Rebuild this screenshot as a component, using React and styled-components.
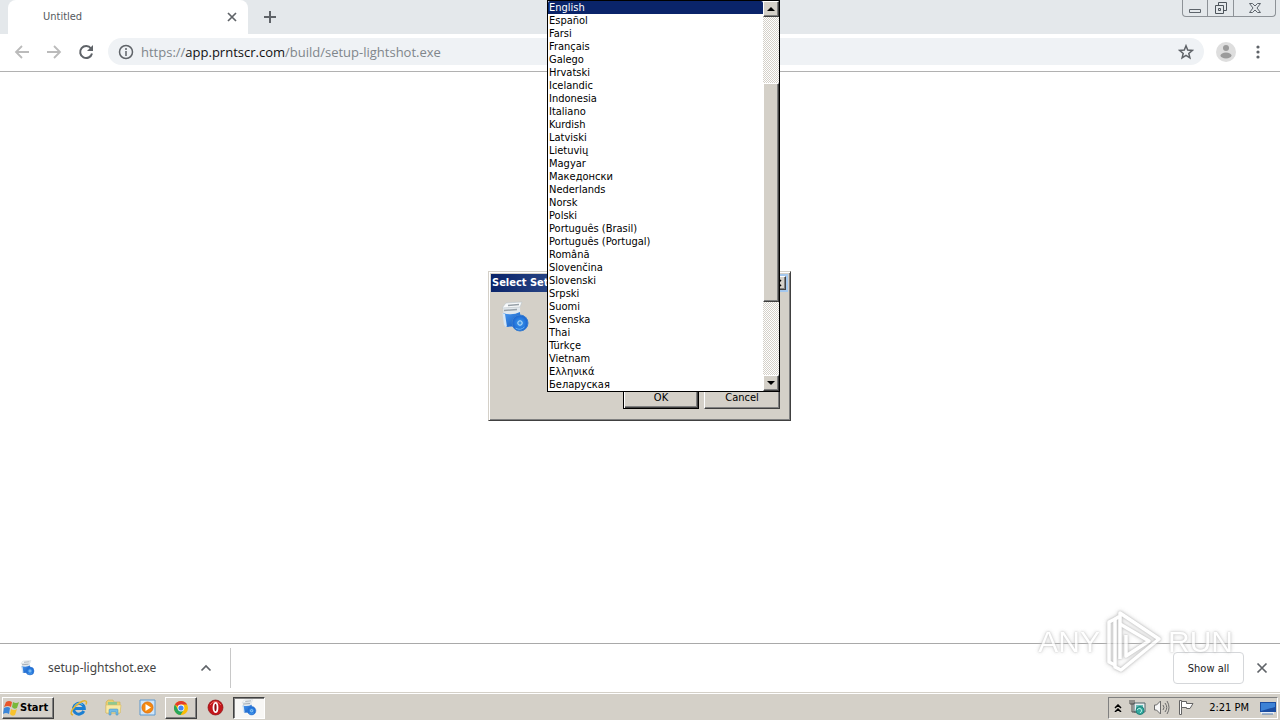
import React from "react";
import styled, { createGlobalStyle, css } from "styled-components";

const GlobalStyle = createGlobalStyle`
  * { box-sizing: border-box; }
  html, body { margin: 0; height: 100%; }
  #root { height: 100%; }
  body, button, input, select {
    font-family: "DejaVu Sans Condensed", "DejaVu Sans", sans-serif;
    font-size: 11px;
    color: #000;
  }
`;

const face = "#d4d0c8";

const Desktop = styled.div`
  position: relative;
  display: flex;
  flex-direction: column;
  min-height: 100vh;
  overflow: hidden;
  background: #fff;
`;

/* Browser window */
const Browser = styled.div`
  flex: 1;
  display: flex;
  flex-direction: column;
`;
const TabStrip = styled.header`
  display: flex;
  align-items: flex-start;
  height: 34px;
  padding-left: 8px;
  background: #e4e8eb;
`;
const Tab = styled.div`
  display: flex;
  align-items: center;
  width: 240px;
  height: 34px;
  padding: 0 10px 0 35px;
  border-radius: 8px 8px 0 0;
  background: #fff;
  color: #55595d;
`;
const TabTitle = styled.span`
  flex: 1;
  line-height: 16px;
`;
const IconButton = styled.button`
  display: grid;
  place-items: center;
  flex: none;
  width: ${(p) => p.$w || 16}px;
  height: ${(p) => p.$h || 16}px;
  padding: 0;
  border: 0;
  background: transparent;
`;
const WindowButtons = styled.div`
  display: flex;
  height: 17px;
  margin: 0 4px 0 auto;
  border: 1px solid #8d9297;
  border-top: 0;
  border-radius: 0 0 4px 4px;
`;
const WindowButton = styled(IconButton)`
  height: 16px;
  & + & { border-left: 1px solid #8d9297; }
`;
const Toolbar = styled.nav`
  display: flex;
  align-items: center;
  height: 38px;
  padding: 0 12px 2px;
  border-bottom: 1px solid #b1b1b1;
  background: #fff;
`;
const NavButtons = styled.div`
  display: flex;
  gap: 12px;
  margin-right: 12px;
`;
const AddressBar = styled.div`
  display: flex;
  align-items: center;
  flex: 1;
  height: 27px;
  padding: 0 9px;
  border-radius: 14px;
  background: #eff2f5;
`;
const Url = styled.a`
  flex: 1;
  margin-left: 6px;
  font-family: "Open Sans", "Noto Sans", sans-serif;
  font-size: 13px;
  line-height: 18px;
  color: #80868b;
  text-decoration: none;
  white-space: nowrap;
`;
const Host = styled.span`
  color: #111;
`;
const ToolbarEnd = styled.div`
  display: flex;
  gap: 12px;
  margin-left: 12px;
`;
const Page = styled.main`
  flex: 1;
`;
const DownloadShelf = styled.footer`
  display: flex;
  align-items: center;
  height: 49px;
  padding-right: 10px;
  border-top: 1px solid #a9a9a9;
  background: #fff;
`;
const DownloadItem = styled.div`
  display: flex;
  align-items: center;
  width: 231px;
  height: 40px;
  padding: 0 16px 0 20px;
  border-right: 1px solid #c8c8c8;
`;
const FileLink = styled.a`
  flex: 1;
  margin-left: 12px;
  font-family: "Noto Sans", sans-serif;
  font-size: 12px;
  line-height: 18px;
  color: #444;
  text-decoration: none;
`;
const ShowAll = styled.button`
  width: 71px;
  height: 32px;
  margin: 0 10px 0 auto;
  border: 1px solid #d5d7da;
  border-radius: 4px;
  background: #fff;
  color: #222;
`;

/* Setup dialog */
const WorkArea = styled.div`
  position: absolute;
  inset: 0 1px 28px 0;
  display: grid;
  place-items: center;
  pointer-events: none;
`;
const Dialog = styled.section`
  position: relative;
  width: 303px;
  height: 150px;
  padding: 2px;
  border: 1px solid;
  border-color: ${face} #404040 #404040 ${face};
  box-shadow: inset 1px 1px #fff, inset -1px -1px #808080;
  background: ${face};
  pointer-events: auto;
`;
const TitleBar = styled.div`
  display: flex;
  align-items: center;
  justify-content: space-between;
  height: 18px;
  padding: 0 2px 0 1px;
  background: linear-gradient(90deg, #0a246a, #a6caf0);
`;
const Title = styled.h1`
  margin: 0;
  font-size: 11px;
  font-weight: bold;
  line-height: 18px;
  color: #fff;
`;
const raised = css`
  border: 1px solid;
  border-color: #fff #404040 #404040 #fff;
  box-shadow: inset -1px -1px #808080;
  background: ${face};
`;
const CloseBox = styled.button`
  ${raised}
  display: grid;
  place-items: center;
  width: 16px;
  height: 14px;
  padding: 0;
`;
const DialogBody = styled.div`
  display: flex;
  flex-direction: column;
  justify-content: space-between;
  height: 126px;
  padding: 9px 8px 9px 9px;
`;
const DialogButtons = styled.div`
  display: flex;
  justify-content: flex-end;
  gap: 5px;
`;
const DialogButton = styled.button`
  ${raised}
  width: 76px;
  height: 23px;
  padding: 0 0 1px;
  ${(p) =>
    p.$primary &&
    css`
      border-color: #000;
      box-shadow: inset 1px 1px #fff, inset -1px -1px #404040, inset -2px -2px #808080;
    `}
`;
const LanguagePopup = styled.div`
  position: absolute;
  left: 58px;
  bottom: 28px;
  display: flex;
  width: 233px;
  border: 1px solid #000;
  background: #fff;
`;
const LanguageList = styled.select`
  flex: 1;
  height: 390px;
  padding: 0;
  border: 0;
  outline: 0;
  overflow: hidden;
  background: #fff;
  scrollbar-width: none;
`;
const Language = styled.option`
  height: 13px;
  min-height: 13px;
  padding: 0 1px;
  font-size: 11px;
  line-height: 13px;
  color: #000;
  &:checked {
    background: linear-gradient(#0a246a, #0a246a);
    -webkit-text-fill-color: #fff;
  }
`;
const ScrollTrack = styled.div`
  display: flex;
  flex-direction: column;
  width: 16px;
  background: repeating-conic-gradient(#fff 0 25%, ${face} 0 50%) 0 0 / 2px 2px;
`;
const ScrollArrow = styled.button`
  ${raised}
  display: grid;
  place-items: center;
  height: 16px;
  padding: 0;
`;
const ScrollThumb = styled.div`
  ${raised}
  height: 219px;
  margin: 66px 0 auto;
`;

/* Taskbar */
const Taskbar = styled.footer`
  display: flex;
  align-items: center;
  height: 28px;
  padding: 2px 2px 0 2px;
  border-top: 1px solid ${face};
  box-shadow: inset 0 1px #fff;
  background: ${face};
`;
const StartButton = styled.button`
  ${raised}
  display: flex;
  align-items: center;
  width: 52px;
  height: 22px;
  padding: 0;
  font-weight: bold;
`;
const TaskButtons = styled.div`
  display: flex;
  gap: 2px;
  margin-left: 9px;
`;
const TaskButton = styled.button`
  display: grid;
  place-items: center;
  width: 32px;
  height: 22px;
  padding: 0;
  border: 0;
  background: transparent;
  ${(p) => p.$state === "open" && raised}
  ${(p) =>
    p.$state === "active" &&
    css`
      border: 1px solid;
      border-color: #404040 #fff #fff #404040;
      box-shadow: inset 1px 1px #808080;
      background: #f8f7f5;
    `}
`;
const Tray = styled.div`
  display: flex;
  align-items: center;
  gap: 7px;
  height: 22px;
  margin-left: auto;
  padding: 0 1px 0 5px;
  border: 1px solid;
  border-color: #808080 #fff #fff #808080;
`;
const Clock = styled.time`
  margin: 0 4px 0 8px;
  line-height: 16px;
`;

/* Watermark */
const Watermark = styled.div`
  position: absolute;
  right: 47px;
  bottom: 46px;
  display: flex;
  align-items: center;
  gap: 5px;
  pointer-events: none;
  opacity: 0.8;
`;
const WatermarkText = styled.span`
  font-family: "Liberation Sans", sans-serif;
  font-size: 30px;
  line-height: 34px;
  color: #fff;
  text-shadow: 0 0 2px #b0b0b0, 0 0 4px #c4c4c4;
`;
const WatermarkLogo = styled.svg`
  filter: drop-shadow(0 0 1px #aaa) drop-shadow(0 0 2px #ccc);
`;

const Stroke = ({ d, size = 16, color = "#5f6368", w = 2, children }) => (
  <svg width={size} height={size} viewBox={`0 0 ${size} ${size}`} fill="none" stroke={color} strokeWidth={w}>
    <path d={d} />
    {children}
  </svg>
);

const SetupIcon = ({ size }) => (
  <svg width={size} height={size} viewBox="0 0 32 32">
    <defs>
      <linearGradient id={`box${size}`} x1="0" y1="0" x2="1" y2="1">
        <stop offset="0" stopColor="#4c9af0" />
        <stop offset="1" stopColor="#0d57c0" />
      </linearGradient>
      <radialGradient id={`disc${size}`}>
        <stop offset="0" stopColor="#9ad6ff" />
        <stop offset=".4" stopColor="#2f86e4" />
        <stop offset="1" stopColor="#1a63cf" />
      </radialGradient>
    </defs>
    <path d="M3 7 6 2 21 1 20 7 21 25 5 26Z" fill="#e3e9ee" />
    <path d="M2 7 20 6 22 1 6 2Z" fill="#f8fafb" stroke="#b9c1c6" strokeWidth=".6" />
    <path d="M8 4.500 19 3.500M4 9.500 17 8.500" stroke="#98a1a8" strokeWidth="1.600" />
    <path d="M3 12q9 3 17-1l1 14-15 1Z" fill={`url(#box${size})`} />
    <path d="M2.500 12 5 13 7 26 4 24Z" fill="#d5e6f6" />
    <circle cx="20" cy="22" r="8" fill={`url(#disc${size})`} stroke="#3a7fd0" />
    <circle cx="20" cy="22" r="2.200" fill="#3b93e6" stroke="#bce0fa" />
    <path d="M15.500 27q5 3 9-1" stroke="#66b6f6" fill="none" />
  </svg>
);

const WindowsLogo = () => (
  <svg width="17" height="18" viewBox="0 0 17 18">
    <path d="M3 3q3-2 6 0L8 8Q5 6 1 8Z" fill="#e9572b" />
    <path d="M10 3q3 2 6 0l-2 6q-3 2-5-1Z" fill="#78b83a" />
    <path d="M1 9q4-2 6 0l-1 6Q3 13 0 15Z" fill="#3b86d8" />
    <path d="M8 10q3 2 6 0l-2 6q-3 2-5-1Z" fill="#f7c22d" />
  </svg>
);

const IeIcon = () => (
  <svg width="18" height="18" viewBox="0 0 18 18" fill="none">
    <path d="M13.800 12A5.400 5.400 0 1 1 14.300 9.500H5" stroke="#1b7fd2" strokeWidth="3" />
    <path d="M4.500 7.500a5 5 0 0 1 8-2" stroke="#7fcdf5" strokeWidth="1" />
    <path d="M3 16C-2 15 4 7 10 3.500 14 1 18 1 16 5.500" stroke="#e3b431" strokeWidth="1.500" />
  </svg>
);

const FolderIcon = () => (
  <svg width="17" height="17" viewBox="0 0 17 17">
    <path d="M1 3 3 1h5l1 2h6v11H1Z" fill="#e9cf72" stroke="#cfae50" strokeWidth=".6" />
    <path d="M3 3h9v3H3Z" fill="#8fc891" />
    <path d="M1 6h15l-1 8H1Z" fill="#f9e9a3" stroke="#dabd62" strokeWidth=".6" />
    <path d="M4 16v-5q0-1 1-1h7q1 0 1 1v5h-2v-3H6v3Z" fill="#74bce5" stroke="#418fbd" strokeWidth=".5" />
  </svg>
);

const PlayerIcon = () => (
  <svg width="17" height="17" viewBox="0 0 17 17">
    <path d="M1 1h15v15H1Z" fill="#cfe5f8" stroke="#5c99cf" />
    <circle cx="8.500" cy="8.500" r="5.500" fill="#f5890f" stroke="#e07414" />
    <path d="M6.500 5 12 8.500 6.500 12Z" fill="#fff" />
  </svg>
);

const ChromeIcon = () => (
  <svg width="16" height="16" viewBox="0 0 16 16">
    <circle cx="8" cy="8" r="7" fill="#fbbc05" />
    <path d="M8 8 1.900 4.500A7 7 0 0 1 14.100 4.500H8Z" fill="#e33b2e" />
    <path d="M1.900 4.500A7 7 0 0 0 7.500 15L11 9.500 8 8 5 9.500Z" fill="#26a65b" />
    <circle cx="8" cy="8" r="3.400" fill="#fff" />
    <circle cx="8" cy="8" r="2.600" fill="#4386f4" />
  </svg>
);

const OperaIcon = () => (
  <svg width="17" height="17" viewBox="0 0 17 17">
    <circle cx="8.500" cy="8.500" r="7.500" fill="#c4161b" stroke="#8b0d10" strokeWidth=".7" />
    <path d="M3 6q5-7 11 0" fill="none" stroke="#ea6a62" />
    <ellipse cx="8.500" cy="8.500" rx="2" ry="4.600" fill="#8c0c10" stroke="#fff" strokeWidth="1.800" />
  </svg>
);

const NetworkIcon = () => (
  <svg width="17" height="17" viewBox="0 0 17 17">
    <path d="M5 4h11v9H5Z" fill="#e9eff0" stroke="#51656a" />
    <path d="M7 6h7v5H7Z" fill="#67bdb8" />
    <path d="M1 1v4h4V1M3 1v12h4" fill="none" stroke="#4e4e4e" />
    <circle cx="11" cy="11.500" r="4" fill="#35aaa0" stroke="#1d8178" />
    <path d="M8 11q2-3 4-1t-1 4" stroke="#b5eee4" fill="none" />
  </svg>
);

const SpeakerIcon = () => (
  <svg width="17" height="17" viewBox="0 0 17 17" fill="none" stroke="#6b6b6b">
    <path d="M1.500 6h2l4-4v13l-4-4h-2Z" fill="#f7f7f7" />
    <path d="M10 6q2 2.500 0 5M12 4q3.500 4.500 0 9M14 2q4 6.500 0 13" />
  </svg>
);

const FlagIcon = () => (
  <svg width="17" height="17" viewBox="0 0 17 17" fill="none" stroke="#646464">
    <path d="M2.500 1.500h2v14h-2Z" fill="#fff" />
    <path d="M4.500 2.500h5v2h6.500l-3 5h-3.500v-1h-5Z" fill="#fff" />
  </svg>
);

const DesktopIcon = () => (
  <svg width="16" height="16" viewBox="0 0 16 16">
    <path d="M0 2h16v10H0Z" fill="#1b4da1" />
    <path d="M1 3h14v4L1 11Z" fill="#3d82d6" />
    <path d="M1 13h13" stroke="#e8eef6" strokeWidth="2" />
    <path d="M2 14h11" stroke="#557eb2" />
  </svg>
);

const PlayMark = () => (
  <WatermarkLogo width="58" height="64" viewBox="0 0 58 64" fill="none" stroke="#fff" strokeWidth="3.500" strokeLinejoin="round">
    <path d="M15 49V3L54 29 16 60 10 57V9L15 6" />
    <path d="M10 9 4 12V52L10 55" />
    <path d="M15 14 44 31 21 46V25" />
  </WatermarkLogo>
);

const languages = [
  "English", "Español", "Farsi", "Français", "Galego", "Hrvatski", "Icelandic", "Indonesia",
  "Italiano", "Kurdish", "Latviski", "Lietuvių", "Magyar", "Македонски", "Nederlands", "Norsk",
  "Polski", "Português (Brasil)", "Português (Portugal)", "Română", "Slovenčina", "Slovenski",
  "Srpski", "Suomi", "Svenska", "Thai", "Türkçe", "Vietnam", "Ελληνικά", "Беларуская",
];

const BrowserWindow = () => (
  <Browser>
    <TabStrip>
      <Tab>
        <TabTitle>Untitled</TabTitle>
        <IconButton $w={12} aria-label="Close tab">
          <Stroke size={12} w={1.7} d="M2 2 10 10M10 2 2 10" />
        </IconButton>
      </Tab>
      <IconButton $w={44} $h={34} aria-label="New tab">
        <Stroke d="M8 2V14M2 8H14" />
      </IconButton>
      <WindowButtons>
        <WindowButton $w={24} aria-label="Minimize">
          <Stroke size={14} w={1} color="#5d646b" d="M1.500 8.500h11v3h-11Z" />
        </WindowButton>
        <WindowButton $w={26} aria-label="Restore">
          <Stroke size={14} w={1} color="#4d545b" d="M1.500 4.500h8v8h-8ZM4.500 7.500h2v2h-2ZM4.500 4V1.500h8v8H10" />
        </WindowButton>
        <WindowButton $w={42} aria-label="Close">
          <Stroke size={14} w={1} color="#5d646b" d="M1.500 2.500h3L7 5l2.500-2.500h3L9 7l3.500 4.500h-3L7 9l-2.500 2.500h-3L5 7Z" />
        </WindowButton>
      </WindowButtons>
    </TabStrip>
    <Toolbar>
      <NavButtons>
        <IconButton $w={20} aria-label="Back">
          <Stroke color="#bbb" w={1.8} d="M15 8H2M8 2 2 8l6 6" />
        </IconButton>
        <IconButton $w={20} aria-label="Forward">
          <Stroke color="#bbb" w={1.8} d="M1 8h13M8 2l6 6-6 6" />
        </IconButton>
        <IconButton $w={20} aria-label="Reload">
          <Stroke d="M13 4.500A6 6 0 1 0 14 9.500">
            <path d="M15 1v6H9Z" fill="#5f6368" stroke="none" />
          </Stroke>
        </IconButton>
      </NavButtons>
      <AddressBar>
        <IconButton $w={18} aria-label="Site information">
          <Stroke w={1.5} d="M8 7v5M8 4v2">
            <circle cx="8" cy="8" r="6.500" />
          </Stroke>
        </IconButton>
        <Url href="#">
          https://<Host>app.prntscr.com</Host>/build/setup-lightshot.exe
        </Url>
        <IconButton $w={18} aria-label="Bookmark">
          <Stroke w={1.5} d="m8 1.800 1.700 4.300 4.600.3-3.500 3 1.100 4.400L8 11.400l-3.900 2.400 1.100-4.400-3.500-3 4.600-.3Z" />
        </IconButton>
      </AddressBar>
      <ToolbarEnd>
        <IconButton $w={20} $h={20} aria-label="Profile">
          <svg width="20" height="20" viewBox="0 0 20 20">
            <circle cx="10" cy="10" r="10" fill="#dedede" />
            <circle cx="10" cy="6" r="3" fill="#9b9b9b" />
            <ellipse cx="10" cy="13.500" rx="5.500" ry="3" fill="#9b9b9b" />
          </svg>
        </IconButton>
        <IconButton $w={20} $h={20} aria-label="Menu">
          <svg width="4" height="16" viewBox="0 0 4 16" fill="#5f6368">
            <circle cx="2" cy="3" r="1.600" />
            <circle cx="2" cy="8" r="1.600" />
            <circle cx="2" cy="13" r="1.600" />
          </svg>
        </IconButton>
      </ToolbarEnd>
    </Toolbar>
    <Page />
    <DownloadShelf>
      <DownloadItem>
        <SetupIcon size={16} />
        <FileLink href="#">setup-lightshot.exe</FileLink>
        <IconButton aria-label="Download options">
          <Stroke size={14} w={1.7} d="M2.500 9.500 7 5l4.500 4.500" />
        </IconButton>
      </DownloadItem>
      <ShowAll>Show all</ShowAll>
      <IconButton aria-label="Close downloads">
        <Stroke w={1.7} d="M3.500 3.500l9 9M12.500 3.500l-9 9" />
      </IconButton>
    </DownloadShelf>
  </Browser>
);

const SetupDialog = () => (
  <WorkArea>
    <Dialog role="dialog" aria-labelledby="setup-title">
      <TitleBar>
        <Title id="setup-title">Select Setup</Title>
        <CloseBox aria-label="Close">
          <Stroke size={8} w={1.5} color="#000" d="M1 1l6 6M7 1 1 7" />
        </CloseBox>
      </TitleBar>
      <DialogBody>
        <SetupIcon size={32} />
        <DialogButtons>
          <DialogButton $primary>OK</DialogButton>
          <DialogButton>Cancel</DialogButton>
        </DialogButtons>
      </DialogBody>
      <LanguagePopup>
        <LanguageList size={30} defaultValue="English" aria-label="Language">
          {languages.map((name) => (
            <Language key={name}>{name}</Language>
          ))}
        </LanguageList>
        <ScrollTrack>
          <ScrollArrow aria-label="Scroll up">
            <svg width="8" height="4" viewBox="0 0 8 4"><path d="M0 4 4 0 8 4Z" /></svg>
          </ScrollArrow>
          <ScrollThumb />
          <ScrollArrow aria-label="Scroll down">
            <svg width="8" height="4" viewBox="0 0 8 4"><path d="M0 0H8L4 4Z" /></svg>
          </ScrollArrow>
        </ScrollTrack>
      </LanguagePopup>
    </Dialog>
  </WorkArea>
);

const SystemTaskbar = () => (
  <Taskbar>
    <StartButton><WindowsLogo />Start</StartButton>
    <TaskButtons>
      <TaskButton aria-label="Internet Explorer"><IeIcon /></TaskButton>
      <TaskButton aria-label="Explorer"><FolderIcon /></TaskButton>
      <TaskButton aria-label="Media Player"><PlayerIcon /></TaskButton>
      <TaskButton $state="open" aria-label="Chrome"><ChromeIcon /></TaskButton>
      <TaskButton aria-label="Opera"><OperaIcon /></TaskButton>
      <TaskButton $state="active" aria-label="Setup"><SetupIcon size={17} /></TaskButton>
    </TaskButtons>
    <Tray>
      <Stroke size={8} w={1.5} color="#000" d="M1 4 4 1l3 3M1 8l3-3 3 3" />
      <NetworkIcon />
      <SpeakerIcon />
      <FlagIcon />
      <Clock>2:21 PM</Clock>
      <DesktopIcon />
    </Tray>
  </Taskbar>
);

export default function App() {
  return (
    <>
      <GlobalStyle />
      <Desktop>
        <BrowserWindow />
        <SetupDialog />
        <SystemTaskbar />
        <Watermark>
          <WatermarkText>ANY</WatermarkText>
          <PlayMark />
          <WatermarkText>RUN</WatermarkText>
        </Watermark>
      </Desktop>
    </>
  );
}
